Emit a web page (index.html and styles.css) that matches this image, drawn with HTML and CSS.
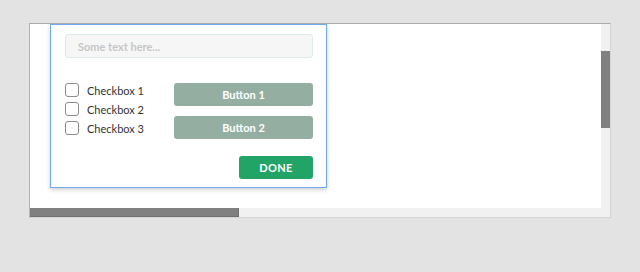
FILE: index.html
```html
<!DOCTYPE html>
<html lang="en">
<head>
    <meta charset="UTF-8">
    <meta name="viewport" content="width=device-width, initial-scale=1.0">
    <title>Dialog preview</title>
    <link rel="stylesheet" href="styles.css">
</head>
<body>
    <div class="frame">
        <div class="viewport">
            <div class="dialog">
                <input class="text-field" type="text" placeholder="Some text here...">

                <div class="options">
                    <div class="checks">
                        <label class="check"><span class="box"></span>Checkbox 1</label>
                        <label class="check"><span class="box"></span>Checkbox 2</label>
                        <label class="check"><span class="box"></span>Checkbox 3</label>
                    </div>
                    <div class="actions">
                        <button class="btn">Button 1</button>
                        <button class="btn">Button 2</button>
                    </div>
                </div>

                <div class="footer">
                    <button class="btn done">DONE</button>
                </div>
            </div>
        </div>
        <div class="vscroll"><div class="vthumb"></div></div>
        <div class="hscroll"><div class="hthumb"></div></div>
        <div class="corner"></div>
    </div>
</body>
</html>
```

FILE: styles.css
```css
body {
    margin: 0;
    padding: 23px 0 0 29px;
    background-color: #e3e3e3;
    font-family: Lato, "Open Sans", sans-serif;
}
.frame {
    display: grid;
    grid-template-columns: 571px 9px;
    grid-template-rows: 184px 9px;
    width: 580px;
    border-top: 1px solid #a9a9a9;
    border-left: 1px solid #b5b5b5;
    border-right: 1px solid #d5d5d5;
    border-bottom: 1px solid #d5d5d5;
}
.viewport {
    background-color: #fff;
    overflow: hidden;
    padding-left: 20px;
}
.dialog {
    width: 277px;
    box-sizing: border-box;
    border: 1px solid #6fa9f4;
    box-shadow: 0 2px 4px rgba(0, 0, 0, 0.18);
    padding: 9px 13px 8px 14px;
    background-color: #fff;
}
.text-field {
    display: block;
    width: 100%;
    height: 24px;
    box-sizing: border-box;
    border: 1px solid #dcece6;
    border-radius: 3px;
    background-color: #f6f6f6;
    padding: 0 12px;
    font-family: inherit;
    font-size: 11px;
    font-weight: bold;
    outline: none;
}
.text-field::placeholder {
    color: #c6c6c6;
}
.options {
    display: grid;
    grid-template-columns: 109px 1fr;
    margin-top: 25px;
}
.checks {
    display: flex;
    flex-direction: column;
    gap: 5px;
}
.check {
    display: flex;
    align-items: center;
    height: 14px;
    font-size: 11px;
    color: #333;
}
.box {
    width: 14px;
    height: 14px;
    box-sizing: border-box;
    border: 1px solid #8c8c8c;
    border-radius: 3px;
    margin-right: 8px;
}
.actions {
    display: flex;
    flex-direction: column;
    gap: 10px;
}
.btn {
    height: 23px;
    border: none;
    border-radius: 3px;
    background-color: #94afa2;
    color: #fff;
    font-family: inherit;
    font-size: 11px;
    font-weight: bold;
    padding: 0;
}
.footer {
    display: flex;
    justify-content: flex-end;
    margin-top: 17px;
}
.done {
    width: 74px;
    background-color: #21a466;
    letter-spacing: 0.3px;
}
.vscroll {
    background-color: #f1f1f1;
}
.vthumb {
    margin-top: 27px;
    height: 77px;
    background-color: #808080;
}
.hscroll {
    background-color: #f1f1f1;
}
.hthumb {
    width: 209px;
    height: 9px;
    background-color: #808080;
    box-shadow: inset -1px -1px 0 #707070;
}
.corner {
    background-color: #f1f1f1;
}
```
